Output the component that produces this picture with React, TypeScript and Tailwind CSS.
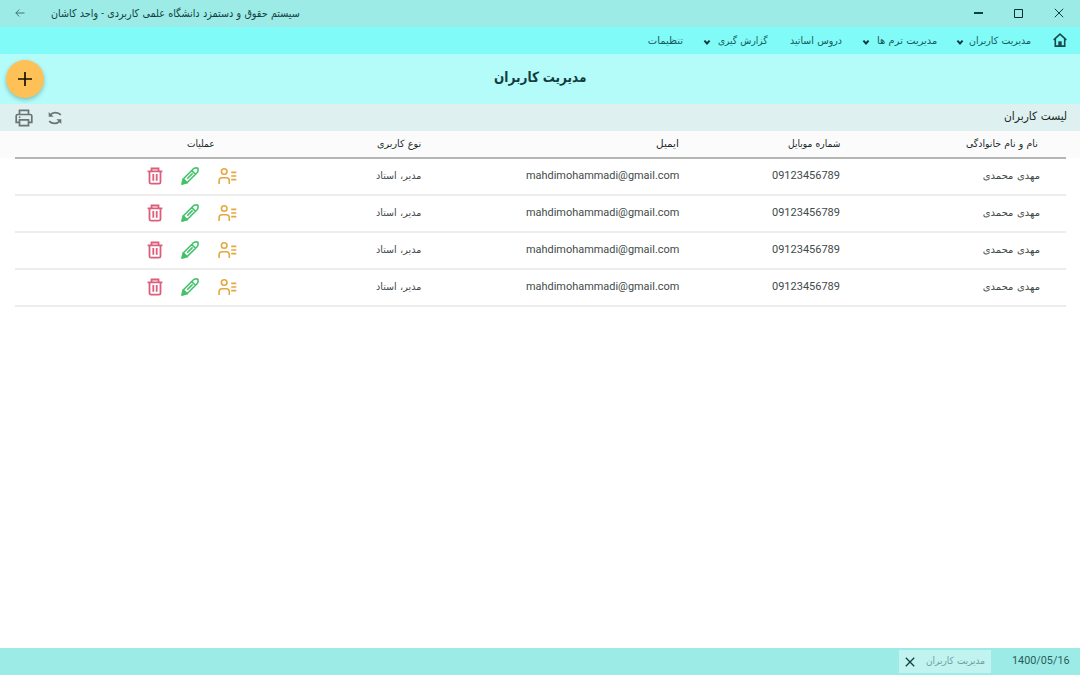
import { useLayoutEffect, useRef, type ReactNode } from "react";

/** One line of text condensed or widened so that it fills the width of its box. */
function Label({ className, children }: { className: string; children: ReactNode }) {
  const box = useRef<HTMLDivElement>(null);
  const text = useRef<HTMLSpanElement>(null);
  useLayoutEffect(() => {
    if (!box.current || !text.current) return;
    const natural = text.current.offsetWidth;
    if (natural > 0) text.current.style.transform = `scaleX(${box.current.clientWidth / natural})`;
  }, []);
  return (
    <div ref={box} className={`flex shrink-0 ${className}`}>
      <span ref={text} className="block shrink-0 origin-right whitespace-nowrap">
        {children}
      </span>
    </div>
  );
}

function Chevron() {
  return (
    <svg viewBox="0 0 8 8" className="mt-0.5 h-2 w-2 shrink-0" fill="none" stroke="#08363a" strokeWidth="1.9">
      <path d="M1.4 2.7 4 5.5 6.6 2.7" />
    </svg>
  );
}

function HomeIcon() {
  return (
    <svg viewBox="0 0 14 14" className="mb-px h-3.5 w-3.5 shrink-0" fill="none" stroke="#174b4e" strokeWidth="1.6">
      <path d="M.7 6.8 7 1.1l6.3 5.7M2.3 5.8v7.3h9.4V5.8" />
      <path d="M5.3 13V8.3h3.4V13z" fill="#174b4e" stroke="none" />
    </svg>
  );
}

function PrinterIcon() {
  return (
    <svg viewBox="0 0 18 18" className="h-[18px] w-[18px]" fill="none" stroke="#6a7474" strokeWidth="1.7">
      <path d="M4.5 5.5V1.3h9v4.2M4.5 13.3H1.2V7c0-1 .5-1.5 1.5-1.5h12.6c1 0 1.5.5 1.5 1.5v6.3h-3.3" />
      <path d="M4.5 10.8h9v5.9h-9z" />
      <path d="M3.9 8.2h1.5" />
    </svg>
  );
}

function RefreshIcon() {
  return (
    <svg viewBox="0 0 14 14" className="h-3.5 w-3.5" fill="none" stroke="#6a7474" strokeWidth="1.8">
      <path d="M2.3 4C4.6.9 9.8.7 12.8 3.8M11.7 10C9.4 13.1 4.2 13.3 1.2 10.2" />
      <path d="M.7.9v4.9h4.9zM13.3 13.1V8.2H8.4z" fill="#6a7474" stroke="none" />
    </svg>
  );
}

function UserListIcon() {
  return (
    <svg viewBox="0 0 19 18" className="h-[18px] w-[19px]" fill="none" stroke="#e5a840" strokeWidth="1.6">
      <circle cx="6.2" cy="4.5" r="2.8" />
      <path d="M1.1 17v-3.3c0-2 1-3 3-3h4.2c2 0 3 1 3 3V17M13.2 5.4h5.1M13.2 9h5.1M13.2 12.6h5.1" />
    </svg>
  );
}

function PencilIcon() {
  return (
    <svg viewBox="0 0 18 18" className="h-[18px] w-[18px]" fill="none" stroke="#42c36b" strokeWidth="1.6" strokeLinejoin="round">
      <path d="M2.2 12 12.5 1.7c.8-.8 3.4-1 4.3-.5.5.9.3 3.5-.5 4.3L6 15.8zM10.8 3.6l3.6 3.6M6.2 11.8l5.4-5.4" />
      <path d="M2.2 12 6 15.8.9 17.1z" fill="#42c36b" />
    </svg>
  );
}

function TrashIcon() {
  return (
    <svg viewBox="0 0 16 18" className="h-[18px] w-4" fill="none" stroke="#db5f7b" strokeWidth="1.8">
      <path d="M.6 4.4h14.8M4.5 4V1.5h7V4M2.5 4.2v11c0 1 .6 1.5 1.6 1.5h7.8c1 0 1.6-.5 1.6-1.5v-11M6.3 7v6.7M9.7 7v6.7" />
    </svg>
  );
}

const users = [1, 2, 3, 4].map((id) => ({
  id,
  name: "مهدی محمدی",
  phone: "09123456789",
  email: "mahdimohammadi@gmail.com",
  role: "مدیر، استاد",
}));

const columns = "grid grid-cols-[200px_161px_258px_184px_222px] items-center pr-[26px]";

export default function App() {
  return (
    <div dir="rtl" className="flex h-[675px] w-[1080px] flex-col overflow-hidden bg-white font-['Roboto','DejaVu_Sans',sans-serif] text-[10px] leading-4 [word-spacing:1px] text-[#303838]">
      <header className="flex h-[27px] shrink-0 items-center justify-between bg-[#9debe7] pr-4 pb-px pl-[15px] text-[#123f40]">
        <div className="flex items-center gap-[31px]">
          <svg viewBox="0 0 10 10" className="h-2.5 w-2.5" fill="none" stroke="#173f40" strokeWidth="1">
            <path d="m.8.8 8.4 8.4M9.2.8.8 9.2" />
          </svg>
          <svg viewBox="0 0 9 9" className="h-[9px] w-[9px]" fill="none" stroke="#082f30" strokeWidth="1">
            <path d="M.5.5h8v8h-8z" />
          </svg>
          <span className="h-0.5 w-[9px] bg-[#123f40]" />
        </div>
        <div className="flex items-center gap-[26px]">
          <Label className="mt-px w-[249px] text-[11px]">سیستم حقوق و دستمزد دانشگاه علمی کاربردی - واحد کاشان</Label>
          <svg viewBox="0 0 10 8" className="h-2 w-2.5" fill="none" stroke="#3d7776" strokeWidth="1">
            <path d="M9.5 4H.8M4.3.5.8 4l3.5 3.5" />
          </svg>
        </div>
      </header>

      <nav className="flex h-[27px] shrink-0 items-center bg-[#80fbf8] pr-[13px] text-[#16595b]">
        <HomeIcon />
        <div className="mr-[22px] flex items-center gap-[5px]">
          <Label className="w-[62px]">مدیریت کاربران</Label>
          <Chevron />
        </div>
        <div className="mr-[19px] flex items-center gap-[7px]">
          <Label className="w-[60px]">مدیریت ترم ها</Label>
          <Chevron />
        </div>
        <Label className="mr-5 w-[52px]">دروس اساتید</Label>
        <div className="mr-[22px] flex items-center gap-[7px]">
          <Label className="w-[50px]">گزارش گیری</Label>
          <Chevron />
        </div>
        <Label className="mr-5 w-[35px]">تنظیمات</Label>
      </nav>

      <section className="flex h-[50px] shrink-0 items-center bg-[#b3fcf9] pr-[494px]">
        <Label className="w-[92px] pb-1 text-[14px] font-bold text-[#143c3e]">مدیریت کاربران</Label>
        <button className="mr-auto ml-1.5 flex h-[38px] w-[38px] items-center justify-center rounded-full bg-[#fec158] shadow-[0_2px_4px_rgba(0,60,60,0.3)]">
          <svg viewBox="0 0 14 14" className="h-3.5 w-3.5" stroke="#161207" strokeWidth="1.7">
            <path d="M7 0v14M0 7h14" />
          </svg>
        </button>
      </section>

      <section className="flex h-[27px] shrink-0 items-center justify-between bg-[#dff0f0] pr-[13px] pl-[15px]">
        <Label className="w-[63px] pb-[3px] text-[11.5px] text-[#1d2828]">لیست کاربران</Label>
        <div className="flex items-center gap-[15px]">
          <RefreshIcon />
          <PrinterIcon />
        </div>
      </section>

      <main className="flex-1">
        <div className="h-[27px] bg-[#fbfbfb] pr-[14px] pl-[15px]">
          <div className={`${columns} h-[28px] border-b-2 border-[#b4b5b5] text-[#202a2a]`}>
            <Label className="mr-0.5 w-[72px]">نام و نام خانوادگی</Label>
            <Label className="w-[52px]">شماره موبایل</Label>
            <Label className="w-[23px]">ایمیل</Label>
            <Label className="w-[44px]">نوع کاربری</Label>
            <Label className="mr-[22px] w-[28px]">عملیات</Label>
          </div>
        </div>
        <div className="pt-px pr-[14px] pl-[15px]">
          {users.map((user) => (
            <div key={user.id} className={`${columns} h-[37px] border-b-2 border-[#ededed] text-[#424a4a]`}>
              <Label className="w-[57px] pb-0.5">{user.name}</Label>
              <Label className="w-[68px] pb-0.5 text-[11px]">{user.phone}</Label>
              <Label className="w-[153px] pb-0.5 text-[11px]">{user.email}</Label>
              <Label className="w-[45px] pb-0.5">{user.role}</Label>
              <div className="flex items-center pb-px">
                <UserListIcon />
                <div className="mr-[19px] flex items-center gap-[18px]">
                  <PencilIcon />
                  <TrashIcon />
                </div>
              </div>
            </div>
          ))}
        </div>
      </main>

      <footer className="flex h-[27px] shrink-0 items-center bg-[#9debe7] pr-2.5 text-[#285c5a]">
        <Label className="w-[58px] pb-px text-[11px]">1400/05/16</Label>
        <div className="mr-[21px] flex h-[23px] w-[92px] items-center justify-between bg-[#c1f3f1] pr-1.5 pl-1.5">
          <Label className="w-[59px] pb-px text-[#729f9d]">مدیریت کاربران</Label>
          <svg viewBox="0 0 10 10" className="h-2.5 w-2.5" stroke="#173f40" strokeWidth="1.3">
            <path d="m.8.8 8.4 8.4M9.2.8.8 9.2" />
          </svg>
        </div>
      </footer>
    </div>
  );
}
